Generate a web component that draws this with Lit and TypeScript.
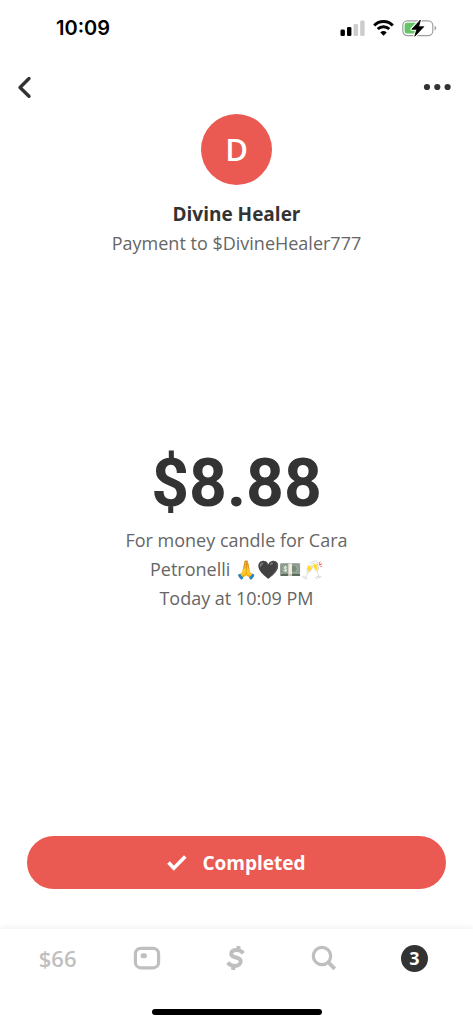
import { LitElement, html, css } from "lit";
import { customElement, property } from "lit/decorators.js";

@customElement("status-bar")
class StatusBar extends LitElement {
  static styles = css`
    :host {
      display: flex;
      justify-content: space-between;
      align-items: center;
      height: 56px;
      padding: 0 36px 0 56px;
      color: #000;
    }
    .time {
      font: 600 20px/24px Inter, sans-serif;
    }
    .icons {
      display: flex;
      align-items: center;
      gap: 8px;
    }
    svg {
      display: block;
    }
  `;

  render() {
    return html`
      <span class="time">10:09</span>
      <div class="icons">
        <svg width="25" height="16" viewBox="0 0 25 16" role="img" aria-label="Signal">
          <rect x="0.5" y="9.6" width="4.4" height="6.4" rx="1.3" />
          <rect x="7" y="7" width="4.4" height="9" rx="1.3" />
          <rect x="13.6" y="4" width="4.4" height="12" rx="1.3" fill="#ccc" />
          <rect x="20.2" y="0.5" width="4.4" height="15.5" rx="1.3" fill="#ccc" />
        </svg>
        <svg width="21" height="16" viewBox="0 0 21 16" role="img" aria-label="Wi-Fi">
          <path d="M1.2 5.4a13 13 0 0 1 18.6 0M4.7 9a8.4 8.4 0 0 1 11.6 0" fill="none" stroke="#000" stroke-width="2.9" />
          <path d="M10.5 15.7 7.3 12.5a4.8 4.8 0 0 1 6.4 0z" />
        </svg>
        <svg width="35" height="18" viewBox="0 0 35 18" role="img" aria-label="Battery charging">
          <rect x="0.8" y="1.8" width="30" height="14.8" rx="4.6" fill="none" stroke="#a0a0a0" stroke-width="1.2" />
          <path d="M32.6 6.8c2.2.8 2.2 3.8 0 4.6z" fill="#a0a0a0" />
          <path d="M5 3.8h9v10.8H5a2.4 2.4 0 0 1-2.4-2.4v-6A2.4 2.4 0 0 1 5 3.8z" fill="#65c466" />
          <path d="M18.4 1 9.8 10.3h5L12.8 17.2 21.8 7.7h-5.2z" stroke="#fff" stroke-width="3" stroke-linejoin="round" />
          <path d="M18.4 1 9.8 10.3h5L12.8 17.2 21.8 7.7h-5.2z" stroke="#000" stroke-width="0.8" stroke-linejoin="round" />
        </svg>
      </div>
    `;
  }
}

@customElement("tab-bar")
class TabBar extends LitElement {
  @property({ type: Number }) balance = 0;
  @property({ type: Number }) unread = 0;

  static styles = css`
    :host {
      display: block;
      background: #fff;
      box-shadow: 0 -2px 6px rgba(0, 0, 0, 0.05);
    }
    .tabs {
      display: grid;
      grid-template-columns: repeat(5, 1fr);
      height: 58px;
      padding: 0 14px 0 13px;
    }
    .tab {
      display: flex;
      align-items: center;
      justify-content: center;
      color: #bfbfbf;
      text-decoration: none;
    }
    .balance {
      font-size: 22px;
      font-weight: 600;
    }
    .badge {
      display: grid;
      place-items: center;
      width: 27px;
      height: 27px;
      border-radius: 50%;
      background: #333;
      color: #fff;
      font-size: 18px;
      font-weight: 700;
      line-height: 27px;
    }
    .home {
      width: 170px;
      height: 6px;
      margin: 22px auto 9px;
      border-radius: 3px;
      background: #000;
    }
    svg {
      display: block;
    }
  `;

  render() {
    return html`
      <nav class="tabs">
        <a class="tab balance" href="#balance">$${this.balance}</a>
        <a class="tab" href="#card" aria-label="Card">
          <svg width="28" height="24" viewBox="0 0 28 24" fill="none" stroke="currentColor">
            <rect x="2.4" y="2.4" width="23.2" height="19.4" rx="5.4" stroke-width="3.2" />
            <rect x="7.5" y="7.3" width="6.4" height="5" rx="2.5" fill="currentColor" stroke="none" />
          </svg>
        </a>
        <a class="tab" href="#pay" aria-label="Pay">
          <svg width="20" height="26" viewBox="0 0 20 26" fill="none" stroke="currentColor" stroke-width="4">
            <path d="M17.3 8.2C15.6 6.2 13.4 5 10.6 5 7.4 5 5.3 6.5 5.2 8.9 5 13.7 15 11.4 14.7 16.3 14.5 19.3 12 20.9 8.9 20.9 5.9 20.9 3.5 19.7 1.6 17.6" />
            <path d="M12 5 12.7 1M7.7 20.9 7 25" />
          </svg>
        </a>
        <a class="tab" href="#search" aria-label="Search">
          <svg width="30" height="26" viewBox="0 0 30 26" fill="none" stroke="currentColor" stroke-width="3.2">
            <circle cx="12" cy="11" r="8.7" />
            <path d="m18.2 17.2 6.6 6.6" stroke-width="3.8" />
          </svg>
        </a>
        <a class="tab" href="#activity" aria-label="Activity"><span class="badge">${this.unread}</span></a>
      </nav>
      <div class="home"></div>
    `;
  }
}

@customElement("app-root")
class AppRoot extends LitElement {
  static styles = css`
    :host {
      display: flex;
      flex-direction: column;
      min-height: 100vh;
      background: #fff;
      color: #333;
      font-family: "Open Sans", "Noto Sans", sans-serif;
      text-align: center;
    }
    .toolbar {
      display: flex;
      justify-content: space-between;
      padding: 16px 14px 0;
    }
    .tool {
      display: grid;
      place-items: center;
      height: 30px;
      padding: 0;
      border: 0;
      background: none;
      color: #333;
    }
    .payee {
      display: flex;
      flex-direction: column;
      align-items: center;
      padding-top: 12px;
    }
    .avatar {
      width: 71px;
      height: 71px;
      margin-bottom: 15px;
      border-radius: 50%;
      background: #eb5a52;
      color: #fff;
      font-size: 31px;
      font-weight: 600;
      line-height: 70px;
    }
    h1,
    p {
      margin: 0;
    }
    h1 {
      font-size: 19px;
      font-weight: 700;
      line-height: 29px;
    }
    p {
      color: #666;
      font-size: 18px;
      line-height: 29px;
    }
    .detail {
      flex: 1;
      display: flex;
      flex-direction: column;
      align-items: center;
      justify-content: center;
      padding-bottom: 40px;
    }
    .amount {
      font-family: Roboto, sans-serif;
      font-size: 66px;
      font-weight: 700;
      line-height: 84px;
    }
    .note {
      max-width: 260px;
    }
    .muted {
      filter: grayscale(0.8);
    }
    .action {
      padding: 0 27px 40px;
    }
    .done {
      display: flex;
      align-items: center;
      justify-content: center;
      gap: 15px;
      width: 100%;
      height: 53px;
      padding: 0;
      border: 0;
      border-radius: 27px;
      background: #eb5a52;
      color: #fff;
      font: inherit;
      font-size: 19px;
      font-weight: 700;
    }
    svg {
      display: block;
    }
  `;

  render() {
    return html`
      <status-bar></status-bar>
      <header class="toolbar">
        <button class="tool" aria-label="Back">
          <svg width="20" height="24" viewBox="0 0 20 24" fill="none" stroke="currentColor" stroke-width="3.4" stroke-linecap="round" stroke-linejoin="round">
            <path d="M15 3.5 6 12.5 15 21.2" />
          </svg>
        </button>
        <button class="tool" aria-label="More">
          <svg width="36" height="8" viewBox="0 0 36 8" fill="currentColor">
            <circle cx="4" cy="4" r="3.1" />
            <circle cx="14.3" cy="4" r="3.1" />
            <circle cx="24.6" cy="4" r="3.1" />
          </svg>
        </button>
      </header>
      <section class="payee">
        <div class="avatar">D</div>
        <h1>Divine Healer</h1>
        <p>Payment to $DivineHealer777</p>
      </section>
      <main class="detail">
        <div class="amount">$8.88</div>
        <p class="note">
          For money candle for Cara Petronelli
          🙏🖤<span class="muted">💵</span>🥂
        </p>
        <p>Today at 10:09 PM</p>
      </main>
      <div class="action">
        <button class="done">
          <svg width="20" height="16" viewBox="0 0 20 16" fill="none" stroke="currentColor" stroke-width="3.6">
            <path d="m1.5 7.6 5.3 5.6L18.3 1.6" />
          </svg>
          Completed
        </button>
      </div>
      <tab-bar .balance=${66} .unread=${3}></tab-bar>
    `;
  }
}
